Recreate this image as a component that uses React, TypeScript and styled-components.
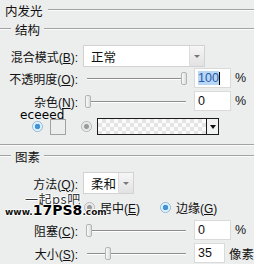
import React from "react";
import styled, { createGlobalStyle } from "styled-components";

const GlobalStyle = createGlobalStyle`
  html, body {
    margin: 0;
    padding: 0;
    background: #eceeed;
    overflow: hidden;
  }
`;

const Panel = styled.div`
  position: relative;
  width: 254px;
  height: 264px;
  overflow: hidden;
  background: #eceeed;
  color: #111;
  font-family: "Liberation Sans", "Noto Sans CJK SC", sans-serif;
  font-size: 12px;
  display: flex;
  flex-direction: column;
`;

const Row = styled.div<{ $h: number; $mt: number; $pl?: number }>`
  display: flex;
  align-items: center;
  flex-shrink: 0;
  height: ${({ $h }) => $h}px;
  margin-top: ${({ $mt }) => $mt}px;
  padding-left: ${({ $pl }) => $pl || 0}px;
`;

const Etched = styled.div<{ $w?: number }>`
  height: 0;
  border-top: 1px solid #a3a3a3;
  border-bottom: 1px solid #fbfbfb;
  flex: ${({ $w }) => ($w ? `0 0 ${$w}px` : "1")};
`;

const GroupTitle = styled.span<{ $pad: number }>`
  padding: 0 ${({ $pad }) => $pad}px;
  font-size: 12.5px;
  white-space: nowrap;
`;

const Label = styled.div`
  width: 78px;
  flex-shrink: 0;
  text-align: right;
  white-space: nowrap;
`;

const Select = styled.div<{ $w: number }>`
  display: flex;
  align-items: stretch;
  width: ${({ $w }) => $w}px;
  height: 22px;
  margin-left: 5px;
  box-sizing: border-box;
  border: 1px solid #d2d2d2;
  background: #fff;
`;

const SelectText = styled.div`
  flex: 1;
  display: flex;
  align-items: center;
  padding-left: 7px;
  font-size: 12.5px;
`;

const SelectArrow = styled.div`
  width: 14px;
  display: flex;
  align-items: center;
  justify-content: center;
  border-left: 1px solid #dcdcdc;
  background: linear-gradient(#f6f6f6, #e2e2e2);
  &::after {
    content: "";
    border-left: 3px solid transparent;
    border-right: 3px solid transparent;
    border-top: 3px solid #777;
  }
`;

const Slider = styled.div`
  position: relative;
  width: 105px;
  height: 100%;
  margin-left: 7px;
  flex-shrink: 0;
  &::before {
    content: "";
    position: absolute;
    left: 2px;
    right: 4px;
    top: 50%;
    border-top: 1px solid #8e8e8e;
    border-bottom: 1px solid #ffffff;
  }
`;

const Thumb = styled.div<{ $pos: number }>`
  position: absolute;
  left: ${({ $pos }) => $pos}px;
  top: calc(50% - 6px);
  width: 6px;
  height: 13px;
  box-sizing: border-box;
  border: 1px solid #b4b4b4;
  border-radius: 2px;
  background: linear-gradient(90deg, #fafafa, #dcdcdc);
`;

const NumBox = styled.div`
  width: 37px;
  height: 20px;
  margin-left: 4px;
  box-sizing: border-box;
  border: 1px solid #dadada;
  background: #fff;
  display: flex;
  align-items: center;
  padding-left: 3px;
  font-size: 12.5px;
`;

const Selected = styled.span`
  background: #b7d7f4;
  color: #2a5aa8;
`;

const Caret = styled.span`
  display: inline-block;
  width: 1px;
  height: 13px;
  background: #000;
`;

const Unit = styled.span`
  margin-left: 4px;
  font-size: 12.5px;
  white-space: nowrap;
`;

const Radio = styled.span<{ $on?: boolean }>`
  width: 11px;
  height: 11px;
  flex-shrink: 0;
  box-sizing: border-box;
  border-radius: 50%;
  border: 1px solid ${({ $on }) => ($on ? "#8bb7dc" : "#b3b3b3")};
  background: ${({ $on }) =>
    $on
      ? "radial-gradient(circle, #3b94dc 0 2.5px, #d6e9f8 3px, #ffffff 5px)"
      : "radial-gradient(circle, #9a9a9a 0 2px, #e6e6e6 3px, #f7f7f7 5px)"};
`;

const Swatch = styled.div`
  width: 16px;
  height: 16px;
  margin-left: 7px;
  box-sizing: border-box;
  border: 1px solid #a2a2a2;
  background: #eceeed;
`;

const GradientBox = styled.div`
  display: flex;
  width: 122px;
  height: 17px;
  margin-left: 5px;
  box-sizing: border-box;
  border: 1px solid #1c1c1c;
`;

const Checker = styled.div`
  flex: 1;
  background-color: #fbfbfb;
  background-image: linear-gradient(45deg, #e4e4e4 25%, transparent 25%, transparent 75%, #e4e4e4 75%),
    linear-gradient(45deg, #e4e4e4 25%, transparent 25%, transparent 75%, #e4e4e4 75%);
  background-size: 8px 8px;
  background-position: 0 0, 4px 4px;
`;

const GradArrow = styled.div`
  width: 11px;
  display: flex;
  align-items: center;
  justify-content: center;
  border-left: 1px solid #1c1c1c;
  background: #f2f2f2;
  &::after {
    content: "";
    border-left: 3px solid transparent;
    border-right: 3px solid transparent;
    border-top: 4px solid #111;
  }
`;

const Option = styled.div<{ $w?: number }>`
  display: flex;
  align-items: center;
  gap: 5px;
  width: ${({ $w }) => ($w ? `${$w}px` : "auto")};
  white-space: nowrap;
`;

const Note = styled.div`
  position: absolute;
  left: 20px;
  top: 108px;
  font-family: "DejaVu Sans", sans-serif;
  font-size: 12px;
  color: #000;
  letter-spacing: 0.1px;
`;

const Mark = styled.div<{ $top: number; $left: number }>`
  position: absolute;
  top: ${({ $top }) => $top}px;
  left: ${({ $left }) => $left}px;
  white-space: nowrap;
  color: #222;
  text-shadow: 1px 0 #fff, -1px 0 #fff, 0 1px #fff, 0 -1px #fff;
`;

const MarkCn = styled.span`
  font-family: "Noto Sans CJK SC", sans-serif;
  font-size: 13px;
  color: #3a3a3a;
  letter-spacing: 0.5px;
`;

const MarkSmall = styled.span`
  font-family: "DejaVu Sans", sans-serif;
  font-weight: bold;
  font-size: 9px;
  color: #111;
`;

const MarkBig = styled.span`
  font-family: "DejaVu Sans", sans-serif;
  font-weight: bold;
  font-size: 14px;
  color: #000;
`;

const SliderRow: React.FC<{
  mt: number;
  label: React.ReactNode;
  pos: number;
  value: React.ReactNode;
  unit: string;
}> = ({ mt, label, pos, value, unit }) => (
  <Row $h={20} $mt={mt}>
    <Label>{label}</Label>
    <Slider>
      <Thumb $pos={pos} />
    </Slider>
    <NumBox>{value}</NumBox>
    <Unit>{unit}</Unit>
  </Row>
);

const App: React.FC = () => {
  return (
    <Panel>
      <GlobalStyle />
      <Row $h={20} $mt={0}>
        <GroupTitle $pad={5}>内发光</GroupTitle>
        <Etched />
      </Row>
      <Row $h={18} $mt={0}>
        <Etched $w={11} />
        <GroupTitle $pad={4}>结构</GroupTitle>
        <Etched />
      </Row>

      <Row $h={22} $mt={7}>
        <Label>混合模式(<u>B</u>):</Label>
        <Select $w={122}>
          <SelectText>正常</SelectText>
          <SelectArrow />
        </Select>
      </Row>

      <SliderRow
        mt={1}
        label={<>不透明度(<u>O</u>):</>}
        pos={96}
        value={
          <>
            <Selected>100</Selected>
            <Caret />
          </>
        }
        unit="%"
      />
      <SliderRow mt={3} label={<>杂色(<u>N</u>):</>} pos={0} value="0" unit="%" />

      <Row $h={17} $mt={7} $pl={32}>
        <Radio $on />
        <Swatch />
        <Radio style={{ marginLeft: 15 }} />
        <GradientBox>
          <Checker />
          <GradArrow />
        </GradientBox>
      </Row>

      <Row $h={2} $mt={9}>
        <Etched />
      </Row>
      <Row $h={18} $mt={1}>
        <Etched $w={11} />
        <GroupTitle $pad={4}>图素</GroupTitle>
        <Etched />
      </Row>

      <Row $h={22} $mt={7}>
        <Label>方法(<u>Q</u>):</Label>
        <Select $w={51}>
          <SelectText>柔和</SelectText>
          <SelectArrow />
        </Select>
      </Row>

      <Row $h={16} $mt={5} $pl={84}>
        <Option $w={76}>
          <Radio />
          <span>居中(<u>E</u>)</span>
        </Option>
        <Option>
          <Radio $on />
          <span>边缘(<u>G</u>)</span>
        </Option>
      </Row>

      <SliderRow mt={5} label={<>阻塞(<u>C</u>):</>} pos={1} value="0" unit="%" />
      <SliderRow mt={3} label={<>大小(<u>S</u>):</>} pos={20} value="35" unit="像素" />

      <Note>eceeed</Note>
      <Mark $top={189} $left={25}>
        <MarkCn>一起ps吧</MarkCn>
      </Mark>
      <Mark $top={202} $left={5}>
        <MarkSmall>www.</MarkSmall>
        <MarkBig>17PS8</MarkBig>
        <MarkSmall>.com</MarkSmall>
      </Mark>
    </Panel>
  );
};

export default App;
